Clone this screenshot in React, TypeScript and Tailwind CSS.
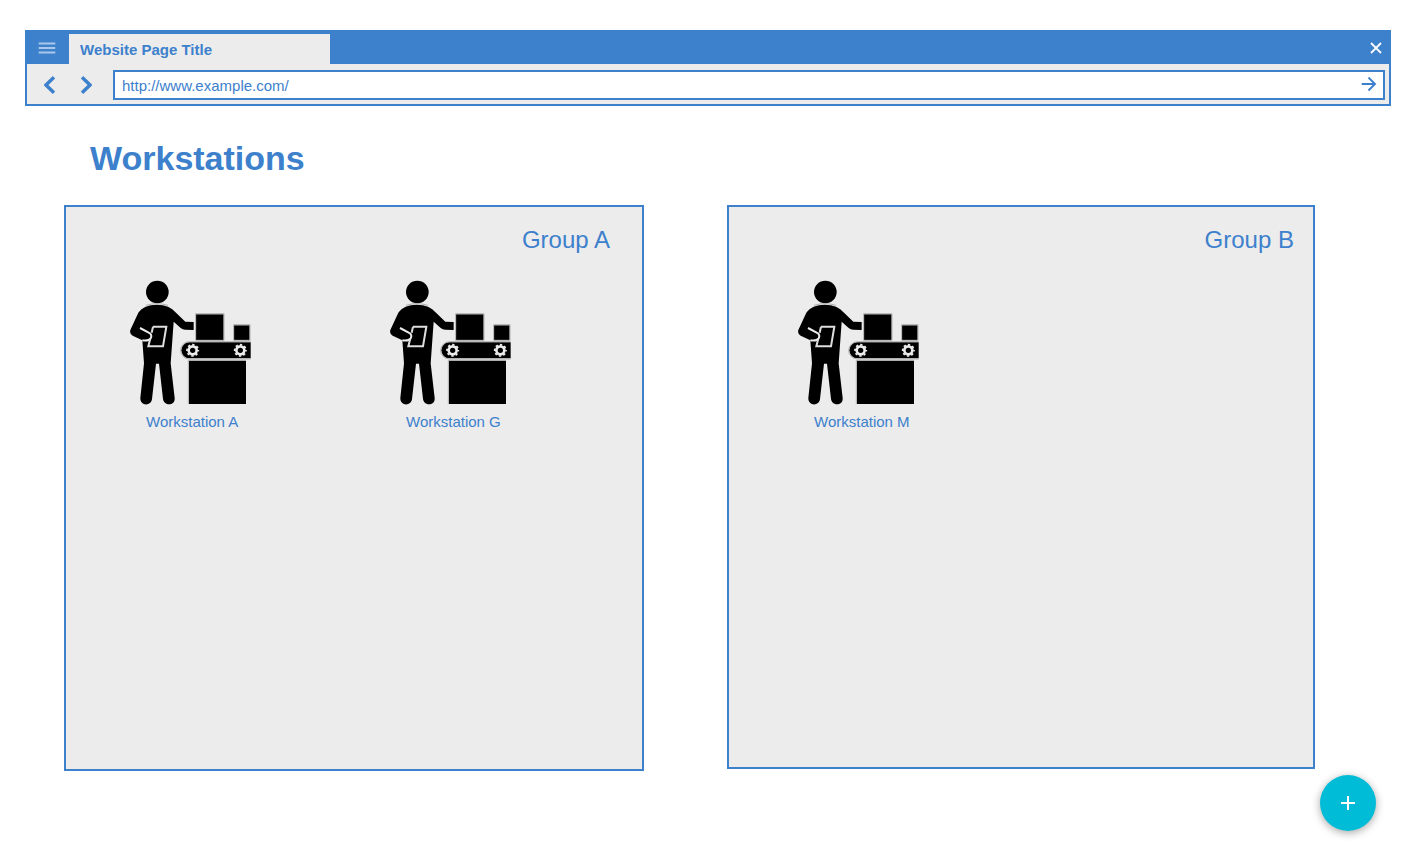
function WorkstationIcon() {
  return (
    <svg viewBox="24 24 378 384" className="h-32 w-[126px]" aria-hidden="true">
      <g fill="#000" stroke="none">
        <circle cx="112" cy="66" r="34" />
        <path d="M110 104 C85 104 66 112 55 128 L31 180 Q28 192 38 197 L67 211 L72 280 L61 384 C60 409 94 409 96 387 L108 281 H117 L129 387 C132 409 166 408 164 384 L152 280 L161 155 L182 174 Q188 179 196 179 L221 180 V156 L196 155 L168 128 C154 112 137 104 110 104 Z" />
        <rect x="228" y="133" width="83" height="77" />
        <rect x="342" y="166" width="47" height="44" />
        <path d="M208 217 H392 V265 H208 A24 24 0 0 1 208 217 Z" />
        <rect x="207" y="272" width="171" height="130" />
      </g>
      <g fill="none" stroke="#b0b0b0" strokeWidth="3">
        <path d="M227 211 V131 H312 V211 Z" />
        <path d="M341 211 V164 H390 V211 Z" />
        <path d="M392 215 H208 A26 26 0 0 0 208 267 H392" />
        <path d="M205 402 V271 H378" />
        <path d="M78 106 Q110 96 144 106" />
      </g>
      <path d="M60 174 L86 188 Q98 194 92 205 Q86 214 67 211" fill="none" stroke="#ececec" strokeWidth="6" />
      <path d="M99 170 H139 L129 229 H85 L90 209 M99 170 L95 188" fill="none" stroke="#dedede" strokeWidth="6" />
      {[218, 361].map((cx) => (
        <g key={cx}>
          <circle cx={cx} cy="241" r="12" fill="none" stroke="#ececec" strokeWidth="8" />
          <circle cx={cx} cy="241" r="17" fill="none" stroke="#ececec" strokeWidth="5" strokeDasharray="7 6.35" strokeDashoffset="3.5" />
        </g>
      ))}
    </svg>
  );
}

function Workstation({ name }: { name: string }) {
  return (
    <a href="#" className="flex w-[130px] flex-col gap-1">
      <WorkstationIcon />
      <span className="pl-[18px] text-[15px] leading-6 whitespace-nowrap">{name}</span>
    </a>
  );
}

function BrowserBar() {
  return (
    <header className="border-2 border-[#3d80cc] bg-[#ececec]">
      <div className="flex h-8 items-center bg-[#3d80cc]">
        <button type="button" aria-label="Menu" className="flex h-8 w-[42px] items-center pl-[11px]">
          <svg viewBox="0 0 18 12" className="h-3 w-[18px]" stroke="#a9c8eb" strokeWidth="2">
            <path d="M.7 1.4h16.6M.7 6h16.6M.7 10.6h16.6" />
          </svg>
        </button>
        <div className="flex h-full w-[261px] pt-0.5">
          <div className="flex-1 bg-[#ececec] pl-[11px] text-[15px] leading-8 font-bold">Website Page Title</div>
        </div>
        <button type="button" aria-label="Close" className="mr-1 ml-auto flex h-8 w-[18px] items-center justify-center">
          <svg viewBox="0 0 12 12" className="h-3 w-3" stroke="#fff" strokeWidth="1.8">
            <path d="M1 1l10 10M11 1L1 11" />
          </svg>
        </button>
      </div>
      <form className="flex items-center pt-1.5 pr-1 pb-1" onSubmit={(e) => e.preventDefault()}>
        <div className="flex w-[86px] gap-3 pl-[11px]">
          <button type="button" aria-label="Back" className="flex h-6 w-6 items-center justify-center">
            <svg viewBox="0 0 12 18" className="h-[18px] w-3" fill="none" stroke="#3d80cc" strokeWidth="3.4">
              <path d="M10 1.2L2 9l8 7.8" />
            </svg>
          </button>
          <button type="button" aria-label="Forward" className="flex h-6 w-6 items-center justify-center">
            <svg viewBox="0 0 12 18" className="h-[18px] w-3" fill="none" stroke="#3d80cc" strokeWidth="3.4">
              <path d="M2 1.2L10 9l-8 7.8" />
            </svg>
          </button>
        </div>
        <div className="flex h-[30px] flex-1 items-center border-2 border-[#3d80cc] bg-white pr-[6px]">
          <input
            aria-label="Address"
            defaultValue="http://www.example.com/"
            className="h-full min-w-0 flex-1 bg-transparent pl-[7px] text-[15px] outline-none"
          />
          <button type="submit" aria-label="Go" className="flex h-4 w-4 items-center justify-center">
            <svg viewBox="0 0 16 16" className="h-4 w-4" fill="none" stroke="#3d80cc" strokeWidth="1.9">
              <path d="M.7 7h13.5M7.5 0.5L14 7l-6.5 6.5" />
            </svg>
          </button>
        </div>
      </form>
    </header>
  );
}

export default function App() {
  return (
    <div className="min-h-screen bg-white pt-[30px] pr-[17px] pb-8 pl-[25px] font-['Liberation_Sans',Arial,sans-serif] text-[#3d80cc]">
      <BrowserBar />
      <main className="pr-[76px] pl-[39px]">
        <h1 className="mt-8 pl-[26px] text-[34px] leading-10 font-bold">Workstations</h1>
        <div className="mt-[27px] grid grid-cols-[580fr_588fr] items-start gap-[83px]">
          <section className="min-h-[566px] border-2 border-[#3d80cc] bg-[#ececec] pt-[19px]">
            <h2 className="pr-8 text-right text-2xl leading-7">Group A</h2>
            <div className="mt-6 flex flex-wrap gap-[130px] pl-[62px]">
              <Workstation name="Workstation A" />
              <Workstation name="Workstation G" />
            </div>
          </section>
          <section className="min-h-[564px] border-2 border-[#3d80cc] bg-[#ececec] pt-[19px]">
            <h2 className="pr-[19px] text-right text-2xl leading-7">Group B</h2>
            <div className="mt-6 flex flex-wrap gap-[130px] pl-[67px]">
              <Workstation name="Workstation M" />
            </div>
          </section>
        </div>
      </main>
      <button
        type="button"
        aria-label="Add workstation"
        className="fixed right-8 bottom-[26px] flex h-14 w-14 items-center justify-center rounded-full bg-[#00bcd7] shadow-[0_2px_8px_rgba(0,0,0,0.35)]"
      >
        <svg viewBox="0 0 14 14" className="h-[14px] w-[14px]" stroke="#fff" strokeWidth="2">
          <path d="M7 0v14M0 7h14" />
        </svg>
      </button>
    </div>
  );
}
